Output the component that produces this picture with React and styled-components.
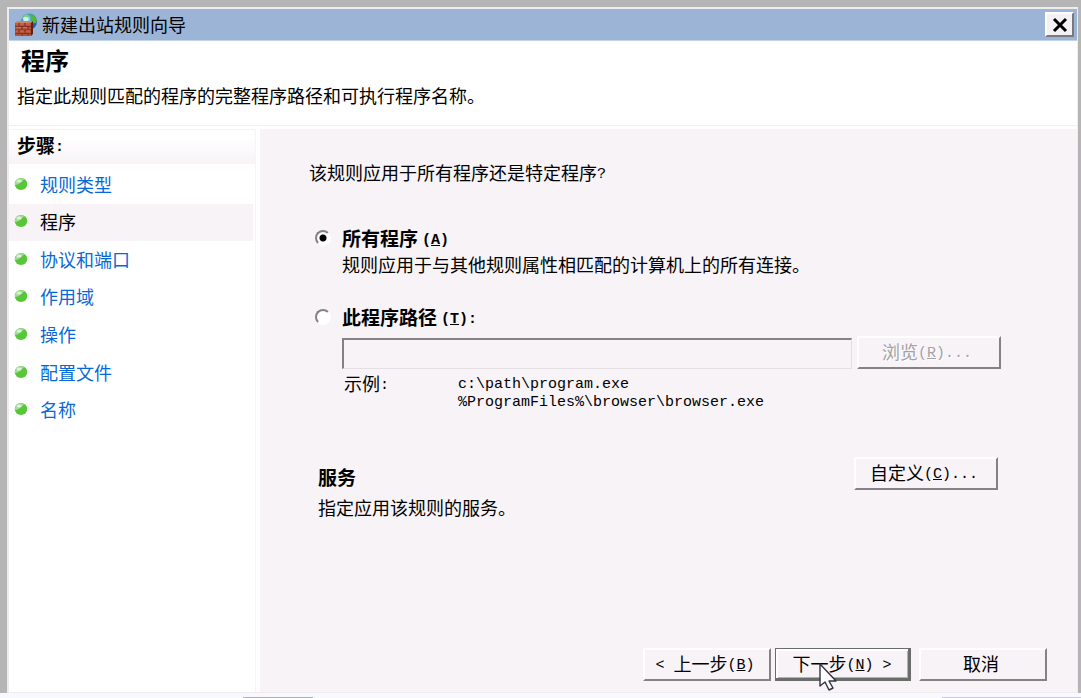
import React from 'react';
import styled, { createGlobalStyle, css } from 'styled-components';

const steps = ['规则类型', '程序', '协议和端口', '作用域', '操作', '配置文件', '名称'];

const FirewallIcon = () => (
  <svg width="24" height="24" viewBox="0 0 24 24" aria-hidden="true">
    <defs>
      <radialGradient id="globe" cx="0.4" cy="0.35" r="0.7">
        <stop offset="0" stopColor="#b8ecff" />
        <stop offset="0.45" stopColor="#3f97e0" />
        <stop offset="1" stopColor="#1c4fa8" />
      </radialGradient>
    </defs>
    <circle cx="15" cy="8.5" r="8" fill="url(#globe)" />
    <path d="M15 1c4 0 7 3 8 6l-1 3-3 0-3-3 1-2z" fill="#52b83c" />
    <path d="M8 5l3-3 3-1-1 3-3 3z" fill="#7fd86b" />
    <path d="M18 11l4-1-2 5-3 1z" fill="#1f5fb8" />
    <path d="M9 5c2-2 5-1 5 1s-2 4-4 3z" fill="#e2f8ff" opacity="0.8" />
    <path d="M1 10l2-2h16l-2 2z" fill="#c9836a" />
    <path d="M17 10l2-2v13l-2 2z" fill="#5e2118" />
    <path d="M1 10h16v13H1z" fill="#b5523a" />
    <path
      d="M1 13.5h16M1 17h16M1 20.5h16M5 10v3.500M11 10v3.500M8 13.500V17M14 13.500V17M5 17v3.500M11 17v3.500M8 20.500V23M14 20.500V23"
      stroke="#7a2c1e"
      strokeWidth="0.8"
      fill="none"
    />
    <path d="M2 11h2M6 11h4M12 11h4M2 14.500h5M9 14.500h4M2 18h2M6 18h4M12 18h4" stroke="#cd7358" strokeWidth="1" />
  </svg>
);

const CloseIcon = () => (
  <svg width="16" height="16" viewBox="0 0 16 16" aria-hidden="true">
    <path d="M2 2l12 12M14 2l-12 12" stroke="#000" strokeWidth="3" />
  </svg>
);

const Bullet = () => (
  <svg width="14" height="14" viewBox="0 0 14 14" aria-hidden="true">
    <ellipse cx="7" cy="7" rx="6.300" ry="6" fill="#58c636" />
    <path d="M1 7a6 5.500 0 0 1 9-5Q9 4 6 6 4 8 1 8z" fill="#a5dba0" />
    <ellipse cx="5" cy="4" rx="2.500" ry="1.600" fill="#dcf3d8" />
  </svg>
);

const Pointer = () => (
  <Cursor width="20" height="30" viewBox="0 0 20 30" aria-hidden="true">
    <path
      d="M1 1v22l5-4 4 8 4-2-4-7h7z"
      fill="#fff"
      stroke="#33333f"
      strokeWidth="1.400"
      strokeLinejoin="round"
    />
  </Cursor>
);

const Key = ({ children }) => (
  <Latin>
    (<u>{children}</u>)
  </Latin>
);

const App = () => {
  const [target, setTarget] = React.useState('all');

  return (
    <Screen>
      <GlobalStyle />
      <Frame>
        <Dialog>
          <TitleBar>
            <FirewallIcon />
            <h1>新建出站规则向导</h1>
            <CloseButton type="button" aria-label="关闭">
              <CloseIcon />
            </CloseButton>
          </TitleBar>

          <Header>
            <h2>程序</h2>
            <p>指定此规则匹配的程序的完整程序路径和可执行程序名称。</p>
          </Header>

          <Body>
            <Sidebar>
              <StepsTitle>
                步骤<Latin>:</Latin>
              </StepsTitle>
              <StepList>
                {steps.map((step) => (
                  <Step key={step} $active={step === '程序'}>
                    <Bullet />
                    <a href="#step">{step}</a>
                  </Step>
                ))}
              </StepList>
            </Sidebar>

            <Main>
              <Question>
                该规则应用于所有程序还是特定程序<Latin>?</Latin>
              </Question>

              <Option>
                <Radio
                  id="all"
                  name="target"
                  checked={target === 'all'}
                  onChange={() => setTarget('all')}
                />
                <OptionLabel htmlFor="all">
                  所有程序<Key>A</Key>
                </OptionLabel>
                <Description>规则应用于与其他规则属性相匹配的计算机上的所有连接。</Description>
              </Option>

              <Option>
                <Radio
                  id="path"
                  name="target"
                  checked={target === 'path'}
                  onChange={() => setTarget('path')}
                />
                <OptionLabel htmlFor="path">
                  此程序路径<Key>T</Key>
                  <Latin>:</Latin>
                </OptionLabel>
                <PathRow>
                  <PathInput
                    type="text"
                    aria-label="此程序路径"
                    disabled={target !== 'path'}
                  />
                  <Button type="button" disabled={target !== 'path'} $width={144}>
                    浏览<Key>R</Key>
                    <Latin>...</Latin>
                  </Button>
                </PathRow>
                <Example>
                  <span>
                    示例<Latin>:</Latin>
                  </span>
                  <Paths>
                    c:\path\program.exe
                    <br />
                    %ProgramFiles%\browser\browser.exe
                  </Paths>
                </Example>
              </Option>

              <Services>
                <div>
                  <h3>服务</h3>
                  <p>指定应用该规则的服务。</p>
                </div>
                <Button type="button" $width={144}>
                  自定义<Key>C</Key>
                  <Latin>...</Latin>
                </Button>
              </Services>

              <Footer>
                <Button type="button" $width={128}>
                  <Latin>&lt; </Latin>上一步<Key>B</Key>
                </Button>
                <Button type="button" $width={136} $primary>
                  下一步<Key>N</Key>
                  <Latin> &gt;</Latin>
                  <Pointer />
                </Button>
                <CancelButton type="button" $width={128}>
                  取消
                </CancelButton>
              </Footer>
            </Main>
          </Body>
        </Dialog>
      </Frame>
      <Taskbar>
        <i />
        <i />
      </Taskbar>
    </Screen>
  );
};

const GlobalStyle = createGlobalStyle`
  * {
    box-sizing: border-box;
  }

  body {
    margin: 0;
    background: #f8f8ff;
  }

  body,
  button,
  input {
    font-family: 'Noto Sans CJK SC', sans-serif;
    font-size: 18px;
    line-height: 26px;
    color: #000;
  }

  h1,
  h2,
  h3,
  p,
  ul {
    margin: 0;
    padding: 0;
    font-size: 18px;
    font-weight: normal;
  }
`;

const Screen = styled.div`
  display: flex;
  flex-direction: column;
  min-height: 100vh;
`;

const Frame = styled.div`
  display: flex;
  flex: 1;
  padding: 7px 3px 0 7px;
  background: #b5b5b5;
`;

const Dialog = styled.div`
  display: flex;
  flex: 1;
  flex-direction: column;
  border: solid #efebef;
  border-width: 2px 1px 1px 2px;
  background: #fff;
`;

const TitleBar = styled.header`
  display: flex;
  align-items: center;
  height: 32px;
  padding: 0 3px 0 5px;
  border-bottom: 1px solid #c3d3e8;
  background: #9cb5d6;

  h1 {
    flex: 1;
    margin-left: 4px;
    line-height: 24px;
    padding-bottom: 2px;
  }
`;

const CloseButton = styled.button`
  display: flex;
  align-items: center;
  justify-content: center;
  width: 29px;
  height: 25px;
  padding: 0;
  border: 2px solid;
  border-color: #fff #7b797b #7b797b #fff;
  background: #f4f1f4;
`;

const Header = styled.div`
  height: 85px;
  padding: 6px 8px 0;
  border-bottom: 1px solid #f1eef1;

  h2 {
    padding-left: 4px;
    font-size: 24px;
    font-weight: bold;
  }

  p {
    margin-top: 9px;
  }
`;

const Body = styled.div`
  display: flex;
  flex: 1;
  padding-top: 3px;
`;

const Sidebar = styled.nav`
  width: 247px;
  margin-right: 4px;
  border: solid #f7f3f7;
  border-width: 1px 1px 0 0;
`;

const Latin = styled.span`
  font-family: 'Liberation Mono', monospace;
  font-size: 15px;
  line-height: 1;
  vertical-align: 2px;
  white-space: pre-wrap;
`;

const Paths = styled(Latin)`
  padding-top: 2px;
  line-height: 18px;
`;

const bold = css`
  font-size: 19px;
  font-weight: bold;
`;

const StepsTitle = styled.h3`
  height: 34px;
  padding: 2px 8px;
  background: linear-gradient(#fff 20%, #f7f3f7);
  && {
    ${bold}
  }
`;

const StepList = styled.ul`
  display: grid;
  grid-auto-rows: 1fr;
  height: 263px;
  margin-top: 2px;
  list-style: none;
`;

const Step = styled.li`
  display: flex;
  align-items: center;
  margin-right: 2px;
  padding: 0 0 2px 5px;
  background: ${({ $active }) => ($active ? '#f7f3f7' : 'none')};

  a {
    margin-left: 12px;
    color: ${({ $active }) => ($active ? '#000' : '#0869d6')};
    text-decoration: none;
  }
`;

const Main = styled.main`
  display: flex;
  flex: 1;
  flex-direction: column;
  padding: 30px 30px 11px 49px;
  background: #f7f3f7;
`;

const Question = styled.p`
  margin-bottom: 13px;
`;

const Option = styled.div`
  display: grid;
  grid-template-columns: 33px 1fr;
  align-items: center;
  margin: 27px 46px 0 0;
`;

const Radio = styled.input.attrs({ type: 'radio' })`
  appearance: none;
  width: 16px;
  height: 16px;
  margin: 0 0 0 6px;
  border: 2px solid;
  border-color: #848284 #fff #fff #848284;
  border-radius: 50%;
  background: #fff;

  &:checked {
    background: radial-gradient(circle, #000 3px, #fff 4px);
  }
`;

const OptionLabel = styled.label`
  ${bold}

  ${Latin}:first-of-type {
    margin-left: 4px;
  }
`;

const Description = styled.p`
  grid-column: 2;
`;

const PathRow = styled.div`
  display: flex;
  grid-column: 2;
  align-items: flex-end;
  gap: 5px;
  margin-top: 6px;
`;

const PathInput = styled.input`
  flex: 1;
  min-width: 0;
  height: 31px;
  border: solid;
  border-width: 2px 1px 1px 2px;
  border-color: #848284 #e3dfe3 #e3dfe3 #848284;
  background: #f7f3f7;
`;

const Button = styled.button`
  position: relative;
  flex: none;
  width: ${({ $width }) => $width}px;
  height: 33px;
  padding: 0 4px 4px 0;
  border: 2px solid;
  border-color: #fff #848284 #848284 #fff;
  background: #f7f3f7;
  line-height: 24px;
  white-space: nowrap;

  &:disabled {
    color: #a5a2a5;
    text-shadow: 1px 1px #fff;
  }

  ${({ $primary }) =>
    $primary &&
    css`
      padding: 0 0 2px;
      border-color: #6b6d6b;
      border-width: 1px 3px 3px 1px;
      box-shadow: inset 2px 2px #fff, inset -1px -1px #b5b2b5;
    `}
`;

const Example = styled.div`
  display: grid;
  grid-column: 2;
  grid-template-columns: 114px 1fr;
  margin-top: 5px;
  padding-left: 2px;
  line-height: 18px;
`;

const Services = styled.section`
  display: flex;
  align-items: flex-start;
  justify-content: space-between;
  margin: 45px 49px 0 9px;

  div {
    padding-top: 7px;
  }

  h3 {
    margin-bottom: 4px;
    ${bold}
  }
`;

const Footer = styled.footer`
  display: flex;
  justify-content: flex-end;
  gap: 4px;
  margin-top: auto;
`;

const CancelButton = styled(Button)`
  margin-left: 4px;
`;

const Cursor = styled.svg`
  position: absolute;
  top: 14px;
  left: 43px;
`;

const Taskbar = styled.div`
  display: flex;
  align-items: flex-end;
  justify-content: space-between;
  height: 5px;
  padding-left: 243px;

  i {
    width: 70px;
    height: 1px;
    background: #b0b0b4;
  }

  i + i {
    width: 139px;
    background: #c9c9dc;
  }
`;

export default App;
